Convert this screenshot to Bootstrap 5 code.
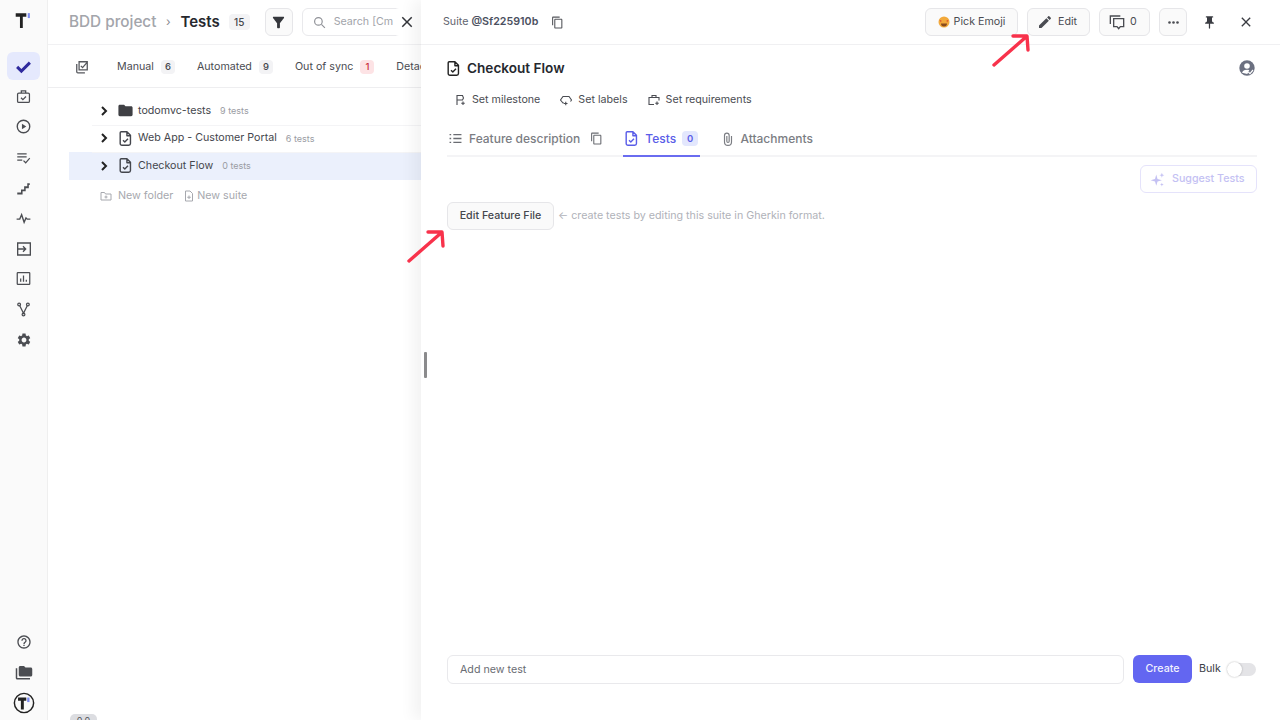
<!DOCTYPE html>
<html lang="en">
<head>
    <meta charset="UTF-8">
    <title>BDD project - Tests</title>
    <link href="https://cdn.jsdelivr.net/npm/bootstrap@5.3.0/dist/css/bootstrap.min.css" rel="stylesheet">
    <style>
        html, body { height: 100%; overflow: hidden; }
        body { font-family: Inter, "Liberation Sans", sans-serif; color: #3a3d45; background: #fff; font-size: 10.7px; }
        svg { display: block; flex: none; }
        .app-shell { width: 1280px; height: 720px; position: relative; overflow: hidden; }
        .side-rail { width: 48px; background: #fafafa; border-right: 1px solid #efefef; }
        .rail-logo { height: 51px; padding-top: 11px; color: #222; }
        .rail-item { width: 33px; height: 30.4px; color: #4b4d52; }
        .rail-item.is-active { color: #2f2a9e; position: relative; }
        .rail-item.is-active::before { content: ""; position: absolute; inset: 1px 0; background: #e5e9fd; border-radius: 6px; }
        .rail-item svg { position: relative; }
        .rail-bottom { padding-bottom: 2px; }
        .list-pane { width: 373px; position: relative; overflow: hidden; }
        .list-top { height: 45px; padding-left: 21px; border-bottom: 1px solid #f1f1f3; white-space: nowrap; }
        .list-top > * { flex: none; }
        .crumb-muted { font-size: 15.3px; font-weight: 500; color: #a3a5ab; }
        .crumb-sep { width: 24px; text-align: center; color: #8a8c92; font-size: 12px; }
        .crumb-now { font-size: 15px; font-weight: 600; color: #26282e; }
        .pill-grey { background: #f3f3f5; color: #44464c; border-radius: 4px; font-size: 9.5px; font-weight: 500; padding: 1px 4px; line-height: 12px; min-width: 14px; text-align: center; margin-left: 7px; }
        .pill-total { width: 21px; height: 16px; margin-left: 9px; font-size: 10px; line-height: 14px; padding: 1px 0; }
        .pill-red { background: #fde3e5; color: #c9303e; }
        .square-btn { width: 28px; height: 28px; border: 1px solid #e6e6e9; border-radius: 6px; background: #fafafa; color: #35373c; }
        .filter-btn { margin-left: 15px; }
        .dots-btn { margin-left: 9px; }
        .search-box { width: 120px; height: 28px; margin-left: 9px; border: 1px solid #e9e9ec; border-radius: 6px; color: #a2a4aa; padding-left: 10px; overflow: hidden; }
        .close-float { position: absolute; left: 345px; top: 8px; width: 28px; height: 28px; background: #fff; border-radius: 6px 0 0 6px; color: #33353a; }
        .filter-row { height: 43px; padding: 2px 0 0 27px; border-bottom: 1px solid #eeeef0; white-space: nowrap; color: #4a4c52; }
        .filter-icon { margin-right: 28px; }
        .filter-gap { margin-left: 22px; }
        .tree-wrap { padding: 9px 0 0 21px; }
        .tree-row { height: 27.5px; padding-left: 29px; white-space: nowrap; color: #44464d; position: relative; }
        .tree-row + .tree-row::before { content: ""; position: absolute; left: 23px; right: 0; top: 0; border-top: 1px solid #f4f4f6; }
        .tree-row.is-picked { background: #ebf0fc; }
        .tree-chev { color: #222; margin-right: 7px; }
        .tree-icon { margin-right: 4px; }
        .tree-count { color: #9a9ca3; font-size: 9px; margin-left: 9px; }
        .new-row { color: #a6a8ae; padding: 8px 0 0 31px; }
        .new-folder-icon { margin-right: 6px; }
        .new-suite-icon { margin: 0 2px 0 10px; }
        .version-chip { position: absolute; left: 22px; top: 714px; width: 27px; height: 16px; background: #dcdde1; border-radius: 5px; color: #55575c; font-size: 9px; text-align: center; }
        .detail-pane { flex: 1; position: relative; background: #fff; box-shadow: -8px 0 14px rgba(0, 0, 0, .05); }
        .resize-grip { position: absolute; left: 3px; top: 352px; width: 3px; height: 26px; background: #8b8b8d; border-radius: 1px; }
        .detail-top { height: 45px; padding: 0 26px 0 22px; border-bottom: 1px solid #f0f0f2; }
        .suite-tag { color: #5f636e; }
        .suite-tag b { color: #4b5060; font-weight: 600; }
        .suite-copy { margin-left: 13px; color: #55575c; }
        .ghost-btn { height: 28px; border: 1px solid #e6e6e9; border-radius: 6px; background: #fafafa; color: #4a4c52; white-space: nowrap; }
        .emoji-btn { width: 93px; gap: 4px; justify-content: center; }
        .edit-btn { width: 63px; gap: 5px; margin-left: 9px; padding-left: 9px; }
        .talk-btn { width: 51px; gap: 5px; margin-left: 9px; padding-left: 9px; }
        .pin-icon { margin-left: 15px; }
        .drawer-close { margin-left: 21px; color: #3a3c42; }
        .detail-body { padding: 0 23px 0 26px; }
        .title-row { height: 46px; }
        .title-icon { margin: 0 5px 0 -2px; color: #222; }
        .suite-title { font-size: 13.6px; font-weight: 600; color: #26282e; margin: 0; }
        .title-avatar { margin-right: 2px; }
        .meta-row { height: 16px; margin-top: 1px; padding-left: 8px; color: #4a4c52; }
        .meta-first { margin-right: 5px; }
        .meta-next { margin: 0 6px 0 20px; }
        .tab-row { height: 37px; margin-top: 12px; padding-top: 2px; border-bottom: 2px solid #f4f4f6; font-size: 12px; color: #7b7d83; font-weight: 500; }
        .tab-list-icon { margin: 0 7px 0 2px; }
        .tab-copy-icon { margin: 0 20px 0 10px; color: #6a6c72; }
        .tab-on { color: #5a5de8; height: 35px; margin-bottom: -2px; border-bottom: 2px solid #6a6cf0; padding-right: 2px; }
        .tab-on-icon { margin-right: 5px; }
        .pill-blue { background: #e3e7fd; color: #5a5de8; border-radius: 4px; font-size: 9.5px; padding: 1px 5px; line-height: 13px; font-weight: 600; margin-left: 6px; }
        .tab-clip-icon { margin: 0 5px 0 21px; }
        .suggest-row { padding-top: 8px; }
        .suggest-btn { width: 117px; height: 28px; padding-left: 9px; gap: 7px; border: 1px solid #e5e3fb; border-radius: 6px; color: #c4c1f3; font-weight: 500; }
        .feature-row { padding-top: 9px; }
        .feature-btn { width: 107px; height: 28px; border: 1px solid #e6e6e9; border-radius: 6px; background: #fafafa; color: #45474d; font-weight: 500; }
        .hint-text { color: #b0b2b9; margin-left: 4px; }
        .new-test { position: absolute; left: 26px; top: 655px; }
        .new-test-input { flex: none; width: 677px; height: 29px; padding: 1px 0 0 12px; border: 1px solid #e9e9ec; border-radius: 6px; color: #6a6c73; }
        .create-btn { width: 59px; height: 28px; margin-left: 9px; border-radius: 6px; background: #6366f1; color: #f2f2fe; font-weight: 500; }
        .bulk-label { height: 28px; margin-left: 7px; padding-top: 1px; }
        .bulk-track { width: 29px; height: 13px; margin: 8px 0 0 6px; background: #e4e4e7; border-radius: 7px; position: relative; }
        .bulk-track::before { content: ""; position: absolute; left: 0; top: -1px; width: 15px; height: 15px; border-radius: 50%; background: #fff; box-shadow: 0 0 2px rgba(0, 0, 0, .3); }
        .note-arrow { position: absolute; pointer-events: none; z-index: 5; }
        .arrow-feature { left: 400px; top: 225px; }
        .arrow-edit { left: 985px; top: 30px; }
    </style>
</head>
<body>
    <svg width="0" height="0" class="position-absolute">
        <defs>
            <symbol id="i-doc" viewBox="0 0 24 24"><path d="M6 2.500h8l5 5V19a2.500 2.500 0 0 1-2.500 2.500H7A2.500 2.500 0 0 1 4.500 19V4A1.500 1.500 0 0 1 6 2.500zM14 2.500V8h5M8.500 14.500l2.500 2.500 4.500-4.500" fill="none" stroke="currentColor" stroke-width="2" stroke-linejoin="round"/></symbol>
            <symbol id="i-copy" viewBox="0 0 24 24"><path d="M16 1H4c-1.100 0-2 .9-2 2v14h2V3h12V1zm3 4H8c-1.100 0-2 .9-2 2v14c0 1.100.9 2 2 2h11c1.100 0 2-.9 2-2V7c0-1.100-.9-2-2-2zm0 16H8V7h11v14z" fill="currentColor"/></symbol>
            <symbol id="i-close" viewBox="0 0 24 24"><path d="M19 6.410 17.590 5 12 10.590 6.410 5 5 6.410 10.590 12 5 17.590 6.410 19 12 13.410 17.590 19 19 17.590 13.410 12z" fill="currentColor"/></symbol>
            <symbol id="i-chev" viewBox="0 0 12 12"><path d="M4 2l4 4-4 4" fill="none" stroke="currentColor" stroke-width="2"/></symbol>
        </defs>
    </svg>

    <div class="app-shell d-flex">
        <nav class="side-rail d-flex flex-column align-items-center flex-shrink-0">
            <div class="rail-logo"><svg width="17" height="17" viewBox="0 0 24 24"><path d="M1 3h15v5h-5v16H7V8H1z" fill="currentColor"/><path d="M18 3h3v7h-3z" fill="#7c8cf0"/></svg></div>
            <div class="rail-item is-active d-flex align-items-center justify-content-center"><svg width="17" height="17" viewBox="0 0 24 24"><path d="M9 15.500 4.500 11 1.500 14 9 21.500 22.500 8l-3-3z" fill="currentColor"/></svg></div>
            <div class="rail-item d-flex align-items-center justify-content-center"><svg width="15" height="15" viewBox="0 0 24 24" fill="none" stroke="currentColor" stroke-width="2"><rect x="2.500" y="6.500" width="19" height="15" rx="2"/><path d="M8.500 6.500V3h7v3.500M8 14l3 3 5-5"/></svg></div>
            <div class="rail-item d-flex align-items-center justify-content-center"><svg width="15" height="15" viewBox="0 0 24 24"><circle cx="12" cy="12" r="10" fill="none" stroke="currentColor" stroke-width="2.200"/><path d="M9.500 7.500v9l7-4.500z" fill="currentColor"/></svg></div>
            <div class="rail-item d-flex align-items-center justify-content-center"><svg width="15" height="15" viewBox="0 0 24 24" fill="none" stroke="currentColor" stroke-width="2"><path d="M2 6h15M2 11h15M2 16h8M12 17l3.500 3.500L22 13"/></svg></div>
            <div class="rail-item d-flex align-items-center justify-content-center"><svg width="15" height="15" viewBox="0 0 24 24"><path d="M2 20h6v-5h5v-5h5V5h4v3h-1.500v5h-5v5h-5v5H2z" fill="currentColor"/></svg></div>
            <div class="rail-item d-flex align-items-center justify-content-center"><svg width="15" height="15" viewBox="0 0 24 24" fill="none" stroke="currentColor" stroke-width="2.200"><path d="M1 13h5l3-7 4 12 3-7 2 2h5"/></svg></div>
            <div class="rail-item d-flex align-items-center justify-content-center"><svg width="16" height="16" viewBox="0 0 24 24" fill="none" stroke="currentColor" stroke-width="2"><path d="M2.500 3h19v18h-19zM2.500 12H14M10.500 8l4 4-4 4"/></svg></div>
            <div class="rail-item d-flex align-items-center justify-content-center"><svg width="15" height="15" viewBox="0 0 24 24" fill="none" stroke="currentColor" stroke-width="2"><rect x="2" y="2.500" width="20" height="19" rx="1"/><path d="M7.500 17v-5M12 17V7M16.500 17v-3"/></svg></div>
            <div class="rail-item d-flex align-items-center justify-content-center"><svg width="15" height="15" viewBox="0 0 24 24" fill="none" stroke="currentColor" stroke-width="2"><circle cx="5" cy="4" r="2.200"/><circle cx="19" cy="4" r="2.200"/><circle cx="12" cy="20" r="2.200"/><path d="M6 6l6 12 6-12"/></svg></div>
            <div class="rail-item d-flex align-items-center justify-content-center"><svg width="16" height="16" viewBox="0 0 24 24"><path d="M19.140 12.940c.04-.3.06-.61.06-.94 0-.32-.02-.64-.07-.94l2.030-1.580c.18-.14.23-.41.12-.61l-1.920-3.320c-.12-.22-.37-.29-.59-.22l-2.390.96c-.5-.38-1.030-.7-1.620-.94l-.36-2.540c-.04-.24-.24-.41-.48-.41h-3.840c-.24 0-.43.17-.47.41l-.36 2.540c-.59.24-1.130.57-1.620.94l-2.390-.96c-.22-.08-.47 0-.59.22L2.740 8.870c-.12.21-.08.47.12.61l2.030 1.580c-.05.3-.09.63-.09.94s.02.64.07.94l-2.030 1.580c-.18.14-.23.41-.12.61l1.920 3.320c.12.22.37.29.59.22l2.390-.96c.5.38 1.030.7 1.620.94l.36 2.540c.05.24.24.41.48.41h3.840c.24 0 .44-.17.47-.41l.36-2.540c.59-.24 1.130-.56 1.620-.94l2.390.96c.22.08.47 0 .59-.22l1.920-3.320c.12-.22.07-.47-.12-.61l-2.010-1.580zM12 15.600c-1.980 0-3.600-1.620-3.600-3.600s1.620-3.600 3.600-3.600 3.600 1.620 3.600 3.600-1.620 3.600-3.600 3.600z" fill="currentColor"/></svg></div>
            <div class="rail-bottom mt-auto d-flex flex-column align-items-center">
                <div class="rail-item d-flex align-items-center justify-content-center"><svg width="16" height="16" viewBox="0 0 24 24"><path d="M11 18h2v-2h-2v2zm1-16C6.480 2 2 6.480 2 12s4.480 10 10 10 10-4.480 10-10S17.520 2 12 2zm0 18c-4.410 0-8-3.590-8-8s3.590-8 8-8 8 3.590 8 8-3.590 8-8 8zm0-14c-2.210 0-4 1.790-4 4h2c0-1.100.9-2 2-2s2 .9 2 2c0 2-3 1.750-3 5h2c0-2.250 3-2.500 3-5 0-2.210-1.790-4-4-4z" fill="currentColor"/></svg></div>
                <div class="rail-item d-flex align-items-center justify-content-center"><svg width="18" height="18" viewBox="0 0 24 24"><path d="M3 7H1v13c0 1.100.9 2 2 2h17v-2H3V7zm18-1h-7l-2-2H7c-1.100 0-2 .9-2 2v10c0 1.100.9 2 2 2h14c1.100 0 2-.9 2-2V8c0-1.100-.9-2-2-2z" fill="currentColor"/></svg></div>
                <div class="rail-item d-flex align-items-center justify-content-center"><svg width="22" height="22" viewBox="0 0 24 24"><circle cx="12" cy="12" r="10.500" fill="none" stroke="#222" stroke-width="1.600"/><path d="M5.500 6h9v3.500h-2.700V19H8.600V9.500H5.500z" fill="#222"/><path d="M15.500 6H18v5h-2.500z" fill="#7c8cf0"/></svg></div>
            </div>
        </nav>

        <section class="list-pane flex-shrink-0">
            <div class="list-top d-flex align-items-center">
                <span class="crumb-muted">BDD project</span>
                <span class="crumb-sep">›</span>
                <span class="crumb-now">Tests</span>
                <span class="pill-grey pill-total">15</span>
                <span class="square-btn filter-btn d-flex align-items-center justify-content-center"><svg width="17" height="17" viewBox="0 0 24 24"><path d="M4.250 5.610C6.270 8.200 10 13 10 13v6c0 .55.45 1 1 1h2c.55 0 1-.45 1-1v-6s3.720-4.800 5.740-7.390c.51-.66.04-1.610-.79-1.610H5.040c-.83 0-1.300.95-.79 1.610z" fill="currentColor"/></svg></span>
                <span class="search-box d-flex align-items-center gap-2"><svg width="13" height="13" viewBox="0 0 24 24" fill="none" stroke="#8f9197" stroke-width="2.200"><circle cx="10" cy="10" r="7"/><path d="M15.500 15.500 22 22"/></svg><span>Search [Cmd+K]</span></span>
            </div>
            <div class="close-float d-flex align-items-center justify-content-center"><svg width="18" height="18"><use href="#i-close"/></svg></div>
            <div class="filter-row d-flex align-items-center">
                <svg width="14" height="14" viewBox="0 0 24 24" fill="none" stroke="#55575c" stroke-width="2.200" class="filter-icon"><path d="M3 7v13a2 2 0 0 0 2 2h12M7 3h14v14H7zM10 10l3 3 7-8"/></svg>
                <span>Manual</span><span class="pill-grey">6</span>
                <span class="filter-gap">Automated</span><span class="pill-grey">9</span>
                <span class="filter-gap">Out of sync</span><span class="pill-grey pill-red">1</span>
                <span class="filter-gap">Detached</span>
            </div>
            <div class="tree-wrap">
                <div class="tree-row d-flex align-items-center">
                    <svg width="12" height="12" class="tree-chev"><use href="#i-chev"/></svg>
                    <svg width="17" height="17" viewBox="0 0 24 24" class="tree-icon"><path d="M10 4H4c-1.100 0-2 .9-2 2v12c0 1.100.9 2 2 2h16c1.100 0 2-.9 2-2V8c0-1.100-.9-2-2-2h-8l-2-2z" fill="#3f4044"/></svg>
                    <span>todomvc-tests</span><span class="tree-count">9 tests</span>
                </div>
                <div class="tree-row d-flex align-items-center">
                    <svg width="12" height="12" class="tree-chev"><use href="#i-chev"/></svg>
                    <svg width="17" height="17" class="tree-icon"><use href="#i-doc"/></svg>
                    <span>Web App - Customer Portal</span><span class="tree-count">6 tests</span>
                </div>
                <div class="tree-row is-picked d-flex align-items-center">
                    <svg width="12" height="12" class="tree-chev"><use href="#i-chev"/></svg>
                    <svg width="17" height="17" class="tree-icon"><use href="#i-doc"/></svg>
                    <span>Checkout Flow</span><span class="tree-count">0 tests</span>
                </div>
                <div class="new-row d-flex align-items-center">
                    <svg width="12" height="12" viewBox="0 0 24 24" fill="none" stroke="#a6a8ae" stroke-width="2" class="new-folder-icon"><path d="M2 5h7l2 3h11v12H2zM12 11v6M9 14h6"/></svg>
                    <span>New folder</span>
                    <svg width="12" height="12" viewBox="0 0 24 24" fill="none" stroke="#a6a8ae" stroke-width="2" class="new-suite-icon"><path d="M5 2h9l5 5v15H5zM12 11v7M8.500 14.500h7"/></svg>
                    <span>New suite</span>
                </div>
            </div>
            <div class="version-chip">0.0</div>
        </section>

        <section class="detail-pane">
            <div class="resize-grip"></div>
            <div class="detail-top d-flex align-items-center">
                <span class="suite-tag">Suite <b>@Sf225910b</b></span>
                <svg width="13" height="13" class="suite-copy"><use href="#i-copy"/></svg>
                <div class="ms-auto d-flex align-items-center">
                    <span class="ghost-btn emoji-btn d-flex align-items-center">
                        <svg width="12" height="12" viewBox="0 0 24 24"><circle cx="12" cy="12" r="11" fill="#f2a93b"/><path d="M3 8l4 1-1 4zM21 8l-4 1 1 4z" fill="#d9472f"/><path d="M6 15h12a6 6 0 0 1-12 0z" fill="#8a4a1c"/></svg>
                        <span>Pick Emoji</span>
                    </span>
                    <span class="ghost-btn edit-btn d-flex align-items-center">
                        <svg width="16" height="16" viewBox="0 0 24 24"><path d="M3 17.250V21h3.750L17.810 9.940l-3.750-3.750L3 17.250zM20.710 7.040c.39-.39.39-1.020 0-1.410l-2.340-2.340c-.39-.39-1.020-.39-1.410 0l-1.830 1.830 3.750 3.750 1.830-1.830z" fill="#4a4c52"/></svg>
                        <span>Edit</span>
                    </span>
                    <span class="ghost-btn talk-btn d-flex align-items-center">
                        <svg width="16" height="16" viewBox="0 0 24 24" fill="none" stroke="#4a4c52" stroke-width="2"><path d="M2 15V3h15M7 7h15v12h-5l-2.500 3-2.500-3H7z"/></svg>
                        <span>0</span>
                    </span>
                    <span class="square-btn dots-btn d-flex align-items-center justify-content-center"><svg width="11" height="3" viewBox="0 0 11 3" fill="#4a4c52"><circle cx="1.500" cy="1.500" r="1.300"/><circle cx="5.500" cy="1.500" r="1.300"/><circle cx="9.500" cy="1.500" r="1.300"/></svg></span>
                    <svg width="15" height="15" viewBox="0 0 24 24" class="pin-icon"><path d="M16 9V4h1c.55 0 1-.45 1-1s-.45-1-1-1H7c-.55 0-1 .45-1 1s.45 1 1 1h1v5c0 1.660-1.340 3-3 3v2h5.970v7l1 1 1-1v-7H19v-2c-1.660 0-3-1.340-3-3z" fill="#3a3c42"/></svg>
                    <svg width="16" height="16" class="drawer-close"><use href="#i-close"/></svg>
                </div>
            </div>
            <div class="detail-body">
                <div class="title-row d-flex align-items-center">
                    <svg width="17" height="17" class="title-icon"><use href="#i-doc"/></svg>
                    <h1 class="suite-title">Checkout Flow</h1>
                    <svg width="16" height="16" viewBox="0 0 24 24" class="title-avatar ms-auto"><circle cx="12" cy="12" r="11.500" fill="#6b7080"/><circle cx="12" cy="9" r="4.200" fill="#fff"/><path d="M4.500 19a8 6 0 0 1 11-4l-3 6z" fill="#fff"/><path d="M14 18l2.500 2.500L21 15" fill="none" stroke="#fff" stroke-width="1.800"/></svg>
                </div>
                <div class="meta-row d-flex align-items-center">
                    <svg width="12" height="12" viewBox="0 0 24 24" fill="none" stroke="#4a4c52" stroke-width="2.200" class="meta-first"><path d="M4 22V3h11l2 5-2 4H4M16 15v7M12.500 18.500h7"/></svg>
                    <span>Set milestone</span>
                    <svg width="12" height="12" viewBox="0 0 24 24" fill="none" stroke="#4a4c52" stroke-width="2.200" class="meta-next"><path d="M8 18H6l-5-6 5-7h12l5 7-2 3M8 19h7M11.500 15.500v7"/></svg>
                    <span>Set labels</span>
                    <svg width="12" height="12" viewBox="0 0 24 24" fill="none" stroke="#4a4c52" stroke-width="2.200" class="meta-next"><path d="M12 21H2V7h20v6M8 7V3h8v4M18 15v7M14.500 18.500h7"/></svg>
                    <span>Set requirements</span>
                </div>
                <div class="tab-row d-flex align-items-center">
                    <svg width="13" height="13" viewBox="0 0 24 24" fill="none" stroke="#6a6c72" stroke-width="2.400" class="tab-list-icon"><path d="M8 5h15M8 12h15M8 19h15M1 5h3M1 12h3M1 19h3"/></svg>
                    <span>Feature description</span>
                    <svg width="13" height="13" class="tab-copy-icon"><use href="#i-copy"/></svg>
                    <span class="tab-on d-flex align-items-center">
                        <svg width="17" height="17" class="tab-on-icon"><use href="#i-doc"/></svg>
                        <span>Tests</span><span class="pill-blue">0</span>
                    </span>
                    <svg width="14" height="14" viewBox="0 0 24 24" fill="none" stroke="#7b7d83" stroke-width="2" class="tab-clip-icon"><path d="M18 7v10a6 6 0 0 1-12 0V6a4 4 0 0 1 8 0v10a2 2 0 0 1-4 0V7"/></svg>
                    <span>Attachments</span>
                </div>
                <div class="suggest-row d-flex justify-content-end">
                    <span class="suggest-btn d-flex align-items-center">
                        <svg width="15" height="15" viewBox="0 0 24 24" fill="#c4c1f3"><path d="M10 4l2 7 7 2-7 2-2 7-2-7-7-2 7-2zM19 1l1 3 3 1-3 1-1 3-1-3-3-1 3-1zM19 17l.8 2.200 2.200.8-2.200.8L19 23l-.8-2.200-2.200-.8 2.200-.8z"/></svg>
                        <span>Suggest Tests</span>
                    </span>
                </div>
                <div class="feature-row d-flex align-items-center">
                    <span class="feature-btn d-flex align-items-center justify-content-center">Edit Feature File</span>
                    <span class="hint-text">← create tests by editing this suite in Gherkin format.</span>
                </div>
            </div>
            <div class="new-test d-flex align-items-start">
                <div class="new-test-input d-flex align-items-center">Add new test</div>
                <span class="create-btn d-flex align-items-center justify-content-center">Create</span>
                <span class="bulk-label d-flex align-items-center">Bulk</span>
                <span class="bulk-track"></span>
            </div>
        </section>

        <svg class="note-arrow arrow-feature" width="50" height="42" viewBox="0 0 50 42" fill="none" stroke="#f8324b" stroke-width="3.400" stroke-linecap="round" stroke-linejoin="round"><path d="M9 36 41 8M28 7h14l1 14"/></svg>
        <svg class="note-arrow arrow-edit" width="50" height="42" viewBox="0 0 50 42" fill="none" stroke="#f8324b" stroke-width="3.400" stroke-linecap="round" stroke-linejoin="round"><path d="M9 35 41 7M28 6h14l1 14"/></svg>
    </div>
    <script src="https://cdn.jsdelivr.net/npm/bootstrap@5.3.0/dist/js/bootstrap.bundle.min.js"></script>
</body>
</html>
